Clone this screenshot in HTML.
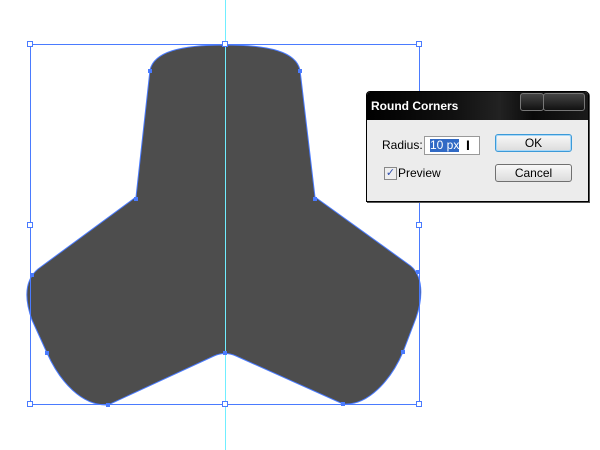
<!DOCTYPE html>
<html><head><meta charset="utf-8"><style>
html,body{margin:0;padding:0;width:600px;height:450px;background:#fff;overflow:hidden;font-family:"Liberation Sans",sans-serif}
#dlg{position:absolute;left:366px;top:91px;width:221px;height:109px;border:1px solid #000;border-radius:4px 4px 0 0;background:#ececec;box-shadow:1px 1px 0 #555}
#tb{position:absolute;left:0;top:0;right:0;height:28px;background:linear-gradient(90deg,#000 0%,#111 40%,#222 60%,#0a0a0a 75%,#1a1a1a 100%);border-radius:3px 3px 0 0}
#tb span{position:absolute;left:4px;top:7px;color:#fff;font-weight:bold;font-size:12px}
.wb{position:absolute;top:1px;height:16px;border:1px solid #777;border-radius:3px;background:linear-gradient(#444,#111)}
.lbl{position:absolute;font-size:12px;color:#000}
.btn{position:absolute;width:75px;height:16px;border:1px solid #707070;border-radius:3px;background:linear-gradient(#f8f8f8,#dcdcdc);font-size:12px;text-align:center;line-height:16px}
</style></head><body>
<svg width="600" height="450" style="position:absolute;left:0;top:0">
<path d="M225,45 C270,45 296,52 300,70 L315,197 L408,264 C424,274 423,298 416,318 L403,352 C391,380 368,406 343,404 L236,356 Q225,351 214,356 L108,405 C82,406 60,382 47,353 L32,320 C24,298 25,280 38,269 L136,197 L150,70 C154,52 180,45 225,45 Z" fill="#4d4d4d" stroke="#4a7bff" stroke-width="1"/>
<line x1="225.5" y1="0" x2="225.5" y2="450" stroke="#70eeff" stroke-width="1"/>
<rect x="30.5" y="44.5" width="389" height="360" fill="none" stroke="#4a7bff"/>
<g fill="#fff" stroke="#4a7bff">
<rect x="27.5" y="41.5" width="5" height="5"/><rect x="222.5" y="41.5" width="5" height="5"/><rect x="416.5" y="41.5" width="5" height="5"/>
<rect x="27.5" y="222.5" width="5" height="5"/><rect x="416.5" y="222.5" width="5" height="5"/>
<rect x="27.5" y="401.5" width="5" height="5"/><rect x="222.5" y="401.5" width="5" height="5"/><rect x="416.5" y="401.5" width="5" height="5"/>
</g>
<g fill="#4a7bff">
<rect x="148" y="69" width="4" height="4"/><rect x="298" y="69" width="4" height="4"/>
<rect x="134" y="197" width="4" height="4"/><rect x="313" y="197" width="4" height="4"/>
<rect x="30" y="273" width="4" height="4"/><rect x="416" y="270" width="4" height="4"/>
<rect x="45" y="351" width="4" height="4"/><rect x="401" y="350" width="4" height="4"/>
<rect x="106" y="403" width="4" height="4"/><rect x="341" y="402" width="4" height="4"/>
<rect x="223" y="351" width="4" height="4"/>
</g>
</svg>
<div id="dlg">
<div id="tb"><span>Round Corners</span>
<div class="wb" style="left:153px;width:22px"></div><div class="wb" style="left:176px;width:40px"></div></div>
<div class="lbl" style="left:15px;top:46px">Radius:</div>
<div style="position:absolute;left:57px;top:44px;width:54px;height:17px;border:1px solid #999;background:#fff">
<span style="position:absolute;left:5px;top:2px;background:#316ac5;color:#fff;font-size:12px;line-height:13px">10 px</span>
<span style="position:absolute;left:41px;top:0px;font-size:14px;font-weight:bold">I</span></div>
<div style="position:absolute;left:17px;top:75px;width:11px;height:11px;border:1px solid #888;background:#eee;font-size:11px;line-height:11px;color:#3050b0;text-align:center">✓</div>
<div class="lbl" style="left:31px;top:74px">Preview</div>
<div class="btn" style="left:128px;top:42px;border-color:#3c9ad8;box-shadow:inset 0 0 0 1px #a8d8f8">OK</div>
<div class="btn" style="left:128px;top:72px">Cancel</div>
</div>
</body></html>
